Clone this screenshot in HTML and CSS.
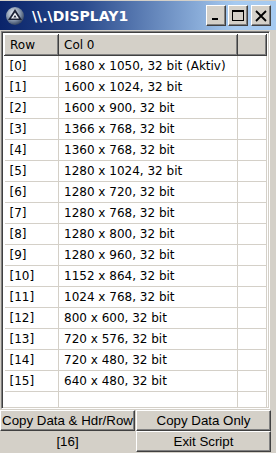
FILE: index.html
```html
<!DOCTYPE html>
<html lang="de">
<head>
  <meta charset="UTF-8">
  <title>\\.\DISPLAY1</title>
  <link rel="stylesheet" href="styles.css">
</head>
<body>

<div class="window">
  <!-- title bar -->
  <div class="titlebar">
    <svg class="app-icon" width="20" height="20" viewBox="0 0 20 20">
      <defs>
        <radialGradient id="ball" cx="0.4" cy="0.35" r="0.7">
          <stop offset="0" stop-color="#e8eef6"/>
          <stop offset="0.6" stop-color="#7f8fa6"/>
          <stop offset="1" stop-color="#2b3a55"/>
        </radialGradient>
      </defs>
      <circle cx="10" cy="10" r="9" fill="url(#ball)"/>
      <path d="M10 3 L17 14 L3 14 Z" fill="#1c2236"/>
      <path d="M10 6.5 L14 12.5 L6 12.5 Z" fill="#f4f6fa"/>
      <path d="M10 9 L11.6 11.5 L8.4 11.5 Z" fill="#1c2236"/>
    </svg>
    <span class="title">\\.\DISPLAY1</span>
    <div class="caption-buttons">
      <div class="cap-btn">
        <svg width="10" height="10" viewBox="0 0 10 10"><rect x="1" y="7" width="6" height="2" fill="#000"/></svg>
      </div>
      <div class="cap-btn">
        <svg width="12" height="12" viewBox="0 0 12 12"><rect x="0.5" y="0.5" width="11" height="10" fill="none" stroke="#000"/><rect x="0" y="0" width="12" height="2" fill="#000"/></svg>
      </div>
      <div class="cap-btn close">
        <svg width="12" height="12" viewBox="0 0 12 12"><path d="M1 1 L11 11 M11 1 L1 11" stroke="#000" stroke-width="1.8"/></svg>
      </div>
    </div>
  </div>

  <!-- list view -->
  <div class="listview">
    <table class="grid">
      <thead>
        <tr><th class="c-row">Row</th><th class="c-val">Col 0</th><th class="c-pad"></th></tr>
      </thead>
      <tbody>
        <tr><td>[0]</td><td>1680 x 1050, 32 bit (Aktiv)</td><td></td></tr>
        <tr><td>[1]</td><td>1600 x 1024, 32 bit</td><td></td></tr>
        <tr><td>[2]</td><td>1600 x 900, 32 bit</td><td></td></tr>
        <tr><td>[3]</td><td>1366 x 768, 32 bit</td><td></td></tr>
        <tr><td>[4]</td><td>1360 x 768, 32 bit</td><td></td></tr>
        <tr><td>[5]</td><td>1280 x 1024, 32 bit</td><td></td></tr>
        <tr><td>[6]</td><td>1280 x 720, 32 bit</td><td></td></tr>
        <tr><td>[7]</td><td>1280 x 768, 32 bit</td><td></td></tr>
        <tr><td>[8]</td><td>1280 x 800, 32 bit</td><td></td></tr>
        <tr><td>[9]</td><td>1280 x 960, 32 bit</td><td></td></tr>
        <tr><td>[10]</td><td>1152 x 864, 32 bit</td><td></td></tr>
        <tr><td>[11]</td><td>1024 x 768, 32 bit</td><td></td></tr>
        <tr><td>[12]</td><td>800 x 600, 32 bit</td><td></td></tr>
        <tr><td>[13]</td><td>720 x 576, 32 bit</td><td></td></tr>
        <tr><td>[14]</td><td>720 x 480, 32 bit</td><td></td></tr>
        <tr><td>[15]</td><td>640 x 480, 32 bit</td><td></td></tr>
        <tr><td></td><td></td><td></td></tr>
      </tbody>
    </table>
  </div>

  <!-- buttons -->
  <div class="actions">
    <button class="btn">Copy Data &amp; Hdr/Row</button>
    <button class="btn">Copy Data Only</button>
    <div class="count">[16]</div>
    <button class="btn">Exit Script</button>
  </div>
</div>

</body>
</html>
```

FILE: styles.css
```css
body {
  margin: 0;
  background-color: #d4d0c8;
  font-family: 'DejaVu Sans', sans-serif;
  font-size: 12px;
  color: #000;
}
.window {
  width: 276px;
  height: 453px;
  background-color: #d4d0c8;
  border-top: 1px solid #d4d0c8;
  box-sizing: border-box;
  overflow: hidden;
}
.titlebar {
  height: 29px;
  display: flex;
  align-items: center;
  padding-left: 5px;
  background: linear-gradient(to right, #0a246a 0%, #2a4a8c 30%, #a6caf0 85%, #a6caf0 100%);
  color: #fff;
}
.app-icon {
  flex: none;
}
.title {
  margin-left: 7px;
  font-weight: bold;
  font-size: 14px;
}
.caption-buttons {
  margin-left: auto;
  margin-right: 5px;
  display: flex;
  gap: 2px;
}
.cap-btn {
  width: 20px;
  height: 21px;
  box-sizing: border-box;
  display: flex;
  align-items: center;
  justify-content: center;
  background-color: #d4d0c8;
  border-top: 1px solid #fff;
  border-left: 1px solid #fff;
  border-right: 1px solid #404040;
  border-bottom: 1px solid #404040;
  box-shadow: inset -1px -1px 0 #808080;
}
.cap-btn.close {
  margin-left: 1px;
}
.listview {
  margin: 1px 6px 0 1px;
  height: 378px;
  box-sizing: border-box;
  background-color: #fff;
  border-top: 1px solid #808080;
  border-left: 1px solid #808080;
  border-right: 1px solid #fff;
  border-bottom: 1px solid #fff;
  box-shadow: inset 1px 1px 0 #404040, inset -1px -1px 0 #d4d0c8;
  padding: 2px 2px 0 2px;
  overflow: hidden;
}
.grid {
  width: 100%;
  border-collapse: collapse;
  table-layout: fixed;
}
.grid th {
  height: 21px;
  box-sizing: border-box;
  padding: 0 0 0 5px;
  text-align: left;
  font-weight: normal;
  background-color: #d4d0c8;
  border-top: 1px solid #fff;
  border-left: 1px solid #fff;
  border-right: 1px solid #404040;
  border-bottom: 1px solid #404040;
  box-shadow: inset -1px -1px 0 #808080;
}
.grid .c-row { width: 54px; }
.grid .c-val { width: 179px; }
.grid td {
  height: 21px;
  box-sizing: border-box;
  padding: 0 0 0 5px;
  white-space: nowrap;
  overflow: hidden;
  border-right: 1px solid #d4d0c8;
  border-bottom: 1px solid #d4d0c8;
}
.actions {
  display: grid;
  grid-template-columns: 135px 135px;
  grid-auto-rows: 21px;
  column-gap: 1px;
  padding-top: 1px;
}
.btn {
  font-family: 'Liberation Sans', Arial, sans-serif;
  font-size: 13.3px;
  padding: 0;
  margin: 0;
  color: #000;
  white-space: nowrap;
  background-color: #d4d0c8;
  border-top: 1px solid #fff;
  border-left: 1px solid #fff;
  border-right: 1px solid #404040;
  border-bottom: 1px solid #404040;
  box-shadow: inset -1px -1px 0 #808080;
}
.count {
  display: flex;
  align-items: center;
  justify-content: center;
  font-family: 'Liberation Sans', Arial, sans-serif;
  font-size: 13.3px;
}
```
